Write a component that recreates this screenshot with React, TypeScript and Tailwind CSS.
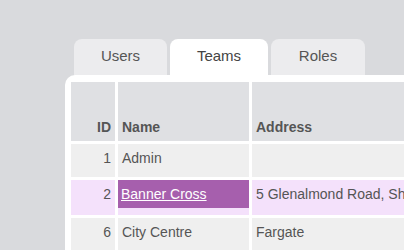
const tabs = [
  { label: 'Users', w: 'w-[93px]', active: false },
  { label: 'Teams', w: 'w-[98px]', active: true },
  { label: 'Roles', w: 'w-[94px]', active: false },
]

const rows = [
  { id: 1, name: 'Admin', address: '' },
  { id: 2, name: 'Banner Cross', address: '5 Glenalmond Road, Sheffield, S11 7GX', selected: true },
  { id: 6, name: 'City Centre', address: 'Fargate' },
]

export default function App() {
  return (
    <div className="h-[250px] w-[404px] overflow-hidden bg-[#d9dadd] pl-[65px] pt-[39px] font-['Liberation_Sans',Arial,sans-serif]">
      <div className="flex gap-[3px] pl-[9px]">
        {tabs.map((t) => (
          <div
            key={t.label}
            className={`${t.w} h-[36px] rounded-t-[8px] pt-[7px] text-center text-[15px] leading-[20px] ${
              t.active ? 'bg-white text-[#444]' : 'bg-[#ececee] text-[#555]'
            }`}
          >
            {t.label}
          </div>
        ))}
      </div>
      <div className="w-[520px] rounded-tl-[10px] bg-white pl-[3px] pt-[4px] pb-[20px]">
        <table className="border-separate border-spacing-[3px] text-[14px] leading-[20px] text-[#555]">
          <thead>
            <tr>
              <th className="h-[59px] w-[44px] bg-[#dfe0e3] px-[4px] pb-[4px] text-right align-bottom font-bold">ID</th>
              <th className="w-[131px] bg-[#dfe0e3] px-[4px] pb-[4px] text-left align-bottom font-bold">Name</th>
              <th className="w-[300px] bg-[#dfe0e3] px-[4px] pb-[4px] text-left align-bottom font-bold">Address</th>
            </tr>
          </thead>
          <tbody>
            {rows.map((r) => {
              const bg = r.selected ? 'bg-[#f4e1fb]' : 'bg-[#efefef]'
              return (
                <tr key={r.id}>
                  <td className={`${bg} ${r.selected ? 'h-[35px]' : 'h-[33px]'} px-[4px] pt-[4px] text-right align-top`}>{r.id}</td>
                  {r.selected ? (
                    <td className={`${bg} p-0 align-top`}>
                      <a className="block bg-[#a65fad] px-[3px] pb-[4px] pt-[4px] text-white underline">{r.name}</a>
                    </td>
                  ) : (
                    <td className={`${bg} px-[4px] pt-[4px] align-top`}>{r.name}</td>
                  )}
                  <td className={`${bg} whitespace-nowrap px-[4px] pt-[4px] align-top`}>{r.address}</td>
                </tr>
              )
            })}
          </tbody>
        </table>
      </div>
    </div>
  )
}
